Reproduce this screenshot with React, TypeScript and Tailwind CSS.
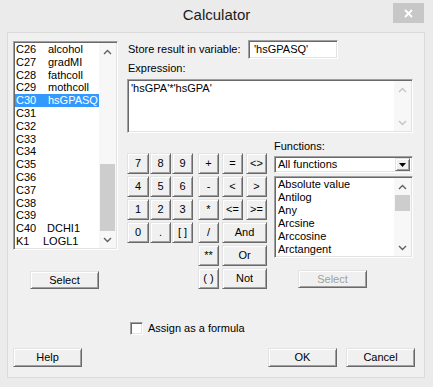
import React from "react";

const raised =
  "bg-[#f0f0f0] border border-t-[#e3e3e3] border-l-[#e3e3e3] border-r-[#696969] border-b-[#696969] shadow-[inset_1px_1px_0_#ffffff,inset_-1px_-1px_0_#a0a0a0]";
const sunken =
  "bg-white border border-t-[#a0a0a0] border-l-[#a0a0a0] border-r-white border-b-white shadow-[inset_1px_1px_0_#696969,inset_-1px_-1px_0_#e3e3e3]";

const columns: [string, string, number][] = [
  ["C26", "alcohol", 32],
  ["C27", "gradMI", 32],
  ["C28", "fathcoll", 32],
  ["C29", "mothcoll", 32],
  ["C30", "hsGPASQ", 32],
  ["C31", "", 32],
  ["C32", "", 32],
  ["C33", "", 32],
  ["C34", "", 32],
  ["C35", "", 32],
  ["C36", "", 32],
  ["C37", "", 32],
  ["C38", "", 32],
  ["C39", "", 32],
  ["C40", "DCHI1", 31],
  ["K1", "LOGL1", 27],
];

const functions = ["Absolute value", "Antilog", "Any", "Arcsine", "Arccosine", "Arctangent"];

function Chevron({ dir, color = "#606060" }: { dir: "up" | "down"; color?: string }) {
  return (
    <svg width="9" height="6" viewBox="0 0 9 6">
      <polyline
        points={dir === "up" ? "1,5 4.5,1.5 8,5" : "1,1 4.5,4.5 8,1"}
        fill="none"
        stroke={color}
        strokeWidth="1.4"
      />
    </svg>
  );
}

function Btn({ label, className = "", disabled }: { label: string; className?: string; disabled?: boolean }) {
  return (
    <button
      type="button"
      className={`${raised} flex items-center justify-center ${disabled ? "text-[#a0a0a0]" : "text-black"} ${className}`}
    >
      {label}
    </button>
  );
}

export default function App() {
  return (
    <div className="w-[433px] h-[387px] bg-[#ebebeb] font-['Liberation_Sans',Arial,sans-serif] text-[11px] leading-[13px] text-black select-none">
      {/* title bar */}
      <div className="relative h-[32px] flex items-center justify-center">
        <span className="text-[15px] leading-[18px] text-[#1b1b1b] -mt-[2px]">Calculator</span>
        <div className="absolute top-[3px] right-[9px] w-[31px] h-[20px] bg-[#c7c7c7] flex items-center justify-center">
          <svg width="9" height="9" viewBox="0 0 9 9">
            <path d="M1 1 L8 8 M8 1 L1 8" stroke="#ffffff" strokeWidth="1.8" />
          </svg>
        </div>
      </div>

      {/* client area */}
      <div className="ml-[7px] mr-[8px] h-[346px] border border-[#dadada] bg-[#f0f0f0] flex flex-col">
        <div className="h-[256px] flex">
          {/* column list */}
          <div className="pl-[5px] pt-[8px] w-[110px] flex flex-col">
            <div className={`${sunken} w-[105px] h-[209px] p-[1px] flex`}>
              <div className="flex-1 overflow-hidden">
                {columns.map(([c, name, w]) => {
                  const sel = c === "C30";
                  return (
                    <div
                      key={c}
                      className={`h-[12.8px] leading-[12.8px] flex pl-[1px] whitespace-nowrap ${sel ? "bg-[#3399ff] text-white" : ""}`}
                    >
                      <span style={{ width: w }}>{c}</span>
                      <span>{name}</span>
                    </div>
                  );
                })}
              </div>
              <div className="w-[17px] bg-[#f7f7f7] flex flex-col">
                <div className="h-[17px] flex items-center justify-center">
                  <Chevron dir="up" />
                </div>
                <div className="flex-1" />
                <div className="h-[67px] mx-[1px] bg-[#cdcdcd]" />
                <div className="h-[17px] flex items-center justify-center">
                  <Chevron dir="down" />
                </div>
              </div>
            </div>
            <Btn label="Select" className="ml-[17px] mt-[21px] w-[69px] h-[18px]" />
          </div>

          {/* right side */}
          <div className="ml-[9px] pt-[7px] w-[286px] flex flex-col">
            <div className="flex items-center h-[19px]">
              <span className="w-[121px] pl-[1px]">Store result in variable:</span>
              <div className={`${sunken} w-[90px] h-[19px] pl-[5px] flex items-center`}>'hsGPASQ'</div>
            </div>
            <div className="mt-[3px] pl-[1px] h-[13px]">Expression:</div>
            <div className={`${sunken} mt-[4px] h-[54px] p-[1px] flex`}>
              <div className="flex-1 pl-[2px] pt-[1px]">'hsGPA'*'hsGPA'</div>
              <div className="w-[17px] bg-[#f7f7f7] flex flex-col justify-between">
                <div className="h-[17px] flex items-center justify-center">
                  <Chevron dir="up" color="#c4c4c4" />
                </div>
                <div className="h-[17px] flex items-center justify-center">
                  <Chevron dir="down" color="#c4c4c4" />
                </div>
              </div>
            </div>

            <div className="flex">
              {/* keypad */}
              <div className="mt-[20px] flex">
                <div className="grid grid-cols-[22px_21px_21px] auto-rows-[21px] gap-x-[1px] gap-y-[2px] self-start">
                  {["7", "8", "9", "4", "5", "6", "1", "2", "3", "0", ".", "[ ]"].map((k) => (
                    <Btn key={k} label={k} />
                  ))}
                </div>
                <div className="ml-[5px] grid grid-cols-[21px_21px_21px] auto-rows-[21px] gap-x-[3px] gap-y-[2px]">
                  <Btn label="+" />
                  <Btn label="=" />
                  <Btn label="<>" />
                  <Btn label="-" />
                  <Btn label="<" />
                  <Btn label=">" />
                  <Btn label="*" />
                  <Btn label="<=" />
                  <Btn label=">=" />
                  <Btn label="/" />
                  <Btn label="And" className="col-span-2" />
                  <Btn label="**" />
                  <Btn label="Or" className="col-span-2" />
                  <Btn label="( )" />
                  <Btn label="Not" className="col-span-2" />
                </div>
              </div>

              {/* functions */}
              <div className="ml-[7px] mt-[7px] w-[139px] flex flex-col">
                <div className="h-[13px]">Functions:</div>
                <div className={`${sunken} mt-[3px] h-[17px] p-[2px] flex items-center`}>
                  <span className="flex-1 pl-[1px]">All functions</span>
                  <div className={`${raised} w-[15px] h-[13px] flex items-center justify-center`}>
                    <svg width="7" height="4" viewBox="0 0 7 4">
                      <path d="M0 0 H7 L3.5 4 Z" fill="#000" />
                    </svg>
                  </div>
                </div>
                <div className={`${sunken} mt-[3px] h-[82px] p-[1px] flex`}>
                  <div className="flex-1 overflow-hidden pl-[2px]">
                    {functions.map((f) => (
                      <div key={f} className="h-[13px] whitespace-nowrap">
                        {f}
                      </div>
                    ))}
                  </div>
                  <div className="w-[17px] bg-[#f7f7f7] flex flex-col">
                    <div className="h-[17px] flex items-center justify-center">
                      <Chevron dir="up" />
                    </div>
                    <div className="h-[16px] mx-[1px] bg-[#cdcdcd]" />
                    <div className="flex-1" />
                    <div className="h-[17px] flex items-center justify-center">
                      <Chevron dir="down" />
                    </div>
                  </div>
                </div>
                <Btn label="Select" disabled className="ml-[24px] mt-[12px] w-[69px] h-[18px]" />
              </div>
            </div>
          </div>
        </div>

        {/* checkbox */}
        <div className="mt-[33px] pl-[122px] flex items-center h-[13px]">
          <div className={`${sunken} w-[13px] h-[13px]`} />
          <span className="ml-[5px]">Assign as a formula</span>
        </div>

        {/* footer buttons */}
        <div className="mt-[13px] pl-[5px] flex">
          <Btn label="Help" className="w-[69px] h-[19px]" />
          <Btn label="OK" className="ml-[186px] w-[69px] h-[19px]" />
          <Btn label="Cancel" className="ml-[9px] w-[69px] h-[19px]" />
        </div>
      </div>
    </div>
  );
}
